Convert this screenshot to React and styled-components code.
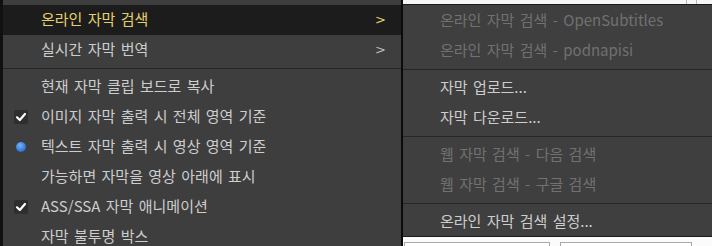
import React from 'react';
import styled, { createGlobalStyle } from 'styled-components';

const GlobalStyle = createGlobalStyle`
  html, body {
    margin: 0;
    padding: 0;
    background: #f7f7f7;
    overflow: hidden;
  }
  body {
    font-family: "Noto Sans CJK KR", "Noto Sans", sans-serif;
  }
`;

const Screen = styled.div`
  display: flex;
  width: 712px;
  height: 246px;
  overflow: hidden;
`;

const MainMenu = styled.div`
  width: 398px;
  height: 246px;
  flex-shrink: 0;
  background: #3e3e3e;
  border-left: 3px solid #111111;
  padding-top: 5px;
  box-sizing: content-box;
`;

const RightSide = styled.div`
  flex: 1;
  display: flex;
  flex-direction: column;
  border-left: 2px solid #0b0b0b;
`;

const TopStrip = styled.div`
  height: 4px;
  background: #f6f6f6;
  border-bottom: 1px solid #1a1a1a;
  display: flex;
`;

const StripLine = styled.div`
  width: 1px;
  background: #b8b8b8;
  margin-left: ${p => p.$left}px;
`;

const SubMenu = styled.div`
  height: 230px;
  padding-top: 1px;
  background: #3f3f3f;
  border-bottom: 1px solid #1c1c1c;
`;

const BottomArea = styled.div`
  flex: 1;
  background: #fbfbfb;
  display: flex;
  align-items: flex-end;
  gap: 10px;
  padding-left: 1px;
`;

const InputBox = styled.div`
  width: ${p => p.$width}px;
  height: 3px;
  border: 1px solid #a9a9a9;
  border-bottom: none;
  background: #ffffff;
`;

const Row = styled.div`
  height: 30px;
  display: flex;
  align-items: center;
  padding-left: ${p => (p.$sub ? 37 : 0)}px;
  background: ${p => (p.$active ? '#1c1c1c' : 'transparent')};
  color: ${p => (p.$active ? '#e6d06c' : p.$disabled ? '#717171' : '#cdcdcd')};
  font-size: 15px;
  word-spacing: 2px;
  white-space: nowrap;
`;

const IconCell = styled.div`
  width: 38px;
  height: 30px;
  flex-shrink: 0;
  display: flex;
  align-items: center;
  justify-content: center;
  padding-right: 3px;
  box-sizing: border-box;
`;

const Label = styled.span`
  flex: 1;
  line-height: 30px;
  margin-top: -2px;
`;

const Arrow = styled.span`
  width: 26px;
  font-size: 13px;
  font-family: "DejaVu Sans", sans-serif;
  color: ${p => (p.$active ? '#e6d06c' : '#bdbdbd')};
  margin-top: -2px;
`;

const Separator = styled.div`
  height: 7px;
  display: flex;
  align-items: center;
  &::after {
    content: '';
    flex: 1;
    height: 1px;
    background: #262626;
  }
`;

const CheckBox = styled.div`
  width: 14px;
  height: 14px;
  border-radius: 2px;
  background: #2e2e2e;
  display: flex;
  align-items: center;
  justify-content: center;
`;

const RadioDot = styled.div`
  width: 10px;
  height: 10px;
  border-radius: 50%;
  background: radial-gradient(circle at 40% 35%, #79b2f5 0%, #3b7fdc 55%, #2458a8 100%);
  box-shadow: 0 0 1px #1d3f78;
`;

const Check = () => (
  <CheckBox>
    <svg width="12" height="12" viewBox="0 0 12 12">
      <path d="M2 6.3 L4.8 9 L10 3" fill="none" stroke="#ffffff" strokeWidth="2.2" strokeLinecap="round" strokeLinejoin="round" />
    </svg>
  </CheckBox>
);

const mainItems = [
  { label: '온라인 자막 검색', arrow: true, active: true },
  { label: '실시간 자막 번역', arrow: true },
  { sep: true },
  { label: '현재 자막 클립 보드로 복사' },
  { label: '이미지 자막 출력 시 전체 영역 기준', icon: 'check' },
  { label: '텍스트 자막 출력 시 영상 영역 기준', icon: 'radio' },
  { label: '가능하면 자막을 영상 아래에 표시' },
  { label: 'ASS/SSA 자막 애니메이션', icon: 'check' },
  { label: '자막 불투명 박스' },
];

const subItems = [
  { label: '온라인 자막 검색 - OpenSubtitles', disabled: true },
  { label: '온라인 자막 검색 - podnapisi', disabled: true },
  { sep: true },
  { label: '자막 업로드...' },
  { label: '자막 다운로드...' },
  { sep: true },
  { label: '웹 자막 검색 - 다음 검색', disabled: true },
  { label: '웹 자막 검색 - 구글 검색', disabled: true },
  { sep: true },
  { label: '온라인 자막 검색 설정...' },
];

const App = () => {
  return (
    <Screen>
      <GlobalStyle />
      <MainMenu>
        {mainItems.map((item, i) =>
          item.sep ? (
            <Separator key={i} />
          ) : (
            <Row key={i} $active={item.active}>
              <IconCell>
                {item.icon === 'check' && <Check />}
                {item.icon === 'radio' && <RadioDot />}
              </IconCell>
              <Label>{item.label}</Label>
              {item.arrow && <Arrow $active={item.active}>&gt;</Arrow>}
            </Row>
          )
        )}
      </MainMenu>
      <RightSide>
        <TopStrip>
          <StripLine $left={283} />
          <StripLine $left={9} />
        </TopStrip>
        <SubMenu>
          {subItems.map((item, i) =>
            item.sep ? (
              <Separator key={i} />
            ) : (
              <Row key={i} $sub $disabled={item.disabled}>
                <Label>{item.label}</Label>
              </Row>
            )
          )}
        </SubMenu>
        <BottomArea>
          <InputBox $width={144} />
          <InputBox $width={130} />
        </BottomArea>
      </RightSide>
    </Screen>
  );
};

export default App;
